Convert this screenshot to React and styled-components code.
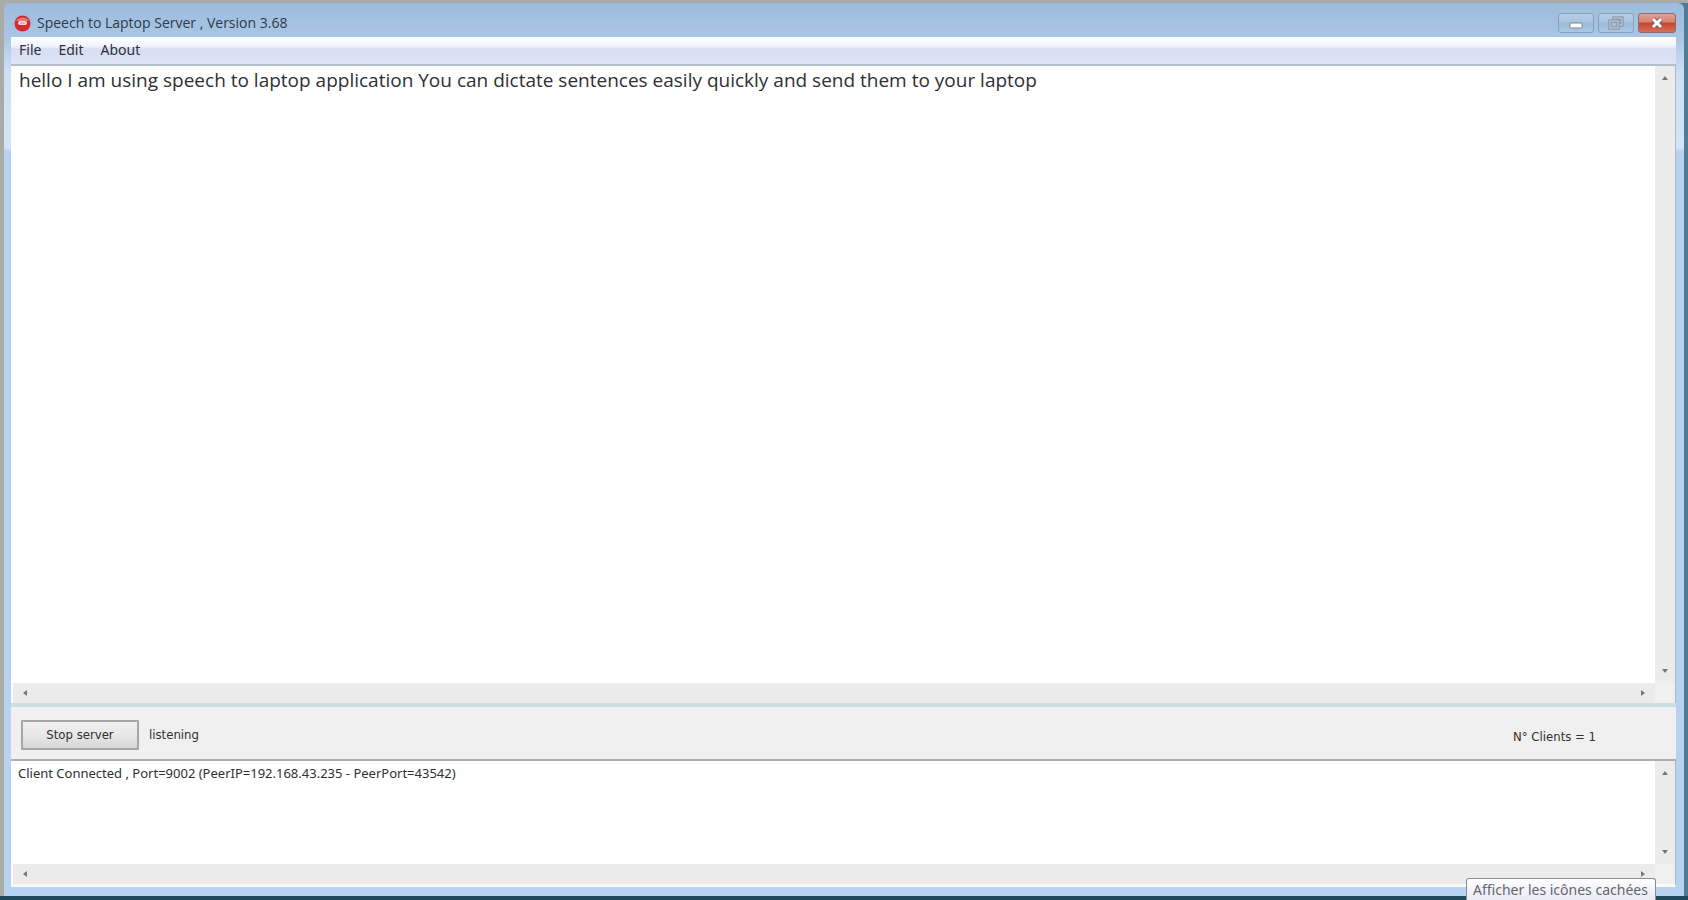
import React from "react";
import styled, { createGlobalStyle } from "styled-components";

const GlobalStyle = createGlobalStyle`
  * {
    box-sizing: border-box;
  }
  body {
    margin: 0;
    background: #a9aba8;
    font-family: "Noto Sans", "Open Sans", sans-serif;
  }
`;

const Desktop = styled.div`
  height: 100vh;
  display: flex;
  padding: 0 4px;
  background: linear-gradient(to right, #a9aba8 50%, #4c7f96 50%);
  border-top: 3px solid #a9aba8;
  border-bottom: 4px solid #1f4a5c;
`;

const Window = styled.main`
  flex: 1;
  min-width: 0;
  display: flex;
  flex-direction: column;
  padding: 0 8px 9px 7px;
  border-radius: 6px 6px 0 0;
  background: linear-gradient(to bottom, #9dbbdb 0, #a9c6e4 34px, #cfe0f4 70px, #d3e4f6 146px, #b7d3f0 147px);
`;

const TitleBar = styled.header`
  height: 34px;
  display: flex;
  align-items: center;
  padding: 6px 0 0 3px;
  gap: 6px;
`;

const Title = styled.h1`
  flex: 1;
  margin: 0;
  font-family: "Open Sans", "Noto Sans", sans-serif;
  font-size: 14px;
  font-weight: 400;
  line-height: 20px;
  color: #2c3a4c;
`;

const WindowButtons = styled.div`
  display: flex;
  gap: 4px;
`;

const WindowButton = styled.button`
  width: ${(props) => (props.$close ? "38px" : "36px")};
  height: 20px;
  display: flex;
  align-items: center;
  justify-content: center;
  padding: 0;
  border: 1px solid ${(props) => (props.$close ? "#8f6a74" : "#86a2bf")};
  border-radius: 3px;
  background: ${(props) =>
    props.$close
      ? "linear-gradient(to bottom, #e0a091 0%, #d98371 45%, #c4442c 50%, #d9705a 100%)"
      : "linear-gradient(to bottom, #b4cce6 0%, #a9c5e0 45%, #9bbad9 50%, #a9c8e4 100%)"};
`;

const MenuBar = styled.nav`
  height: 29px;
  display: flex;
  align-items: flex-start;
  gap: 17px;
  padding: 4px 8px;
  border-bottom: 2px solid #b4bfca;
  background: linear-gradient(to bottom, #ffffff 0, #f1f3fc 9px, #d9dff3 12px, #dde4f5 100%);
`;

const MenuItem = styled.button`
  padding: 0;
  border: 0;
  background: none;
  font: 14px/18px "Noto Sans", "Open Sans", sans-serif;
  color: #30303c;
`;

const Pane = styled.section`
  display: grid;
  grid-template-columns: 1fr 20px;
  grid-template-rows: 1fr 20px;
  flex: ${(props) => (props.$grow ? "1" : "0 0 126px")};
  min-height: 0;
  background: #f0f0f0;
  border-left: 2px solid #ffffff;
  border-right: 1px solid #a9b7c6;
  border-bottom: ${(props) => (props.$grow ? "0" : "3px solid #fafafa")};
`;

const TextBox = styled.textarea`
  width: 100%;
  height: 100%;
  margin: 0;
  border: 0;
  outline: none;
  resize: none;
  overflow: hidden;
  background: #ffffff;
  color: #303030;
  padding: ${(props) => (props.$small ? "4px 5px" : "2px 6px")};
  font-family: ${(props) =>
    props.$small ? '"Noto Sans", "Open Sans", sans-serif' : '"Open Sans", "Noto Sans", sans-serif'};
  font-size: ${(props) => (props.$small ? "13px" : "19px")};
  line-height: ${(props) => (props.$small ? "16px" : "24px")};
`;

const ScrollTrack = styled.div`
  display: flex;
  flex-direction: ${(props) => (props.$vertical ? "column" : "row")};
  justify-content: space-between;
  align-items: center;
  padding: ${(props) => (props.$vertical ? "8px 0" : "0 8px")};
  background: #ececec;
`;

const ScrollButton = styled.button`
  width: 8px;
  height: 8px;
  display: flex;
  align-items: center;
  justify-content: center;
  padding: 0;
  border: 0;
  background: none;
`;

const StatusPanel = styled.section`
  height: 58px;
  display: flex;
  align-items: center;
  padding: 4px 80px 0 10px;
  gap: 10px;
  background: #f0f0f0;
  border-top: 4px solid #cddde4;
  border-bottom: 2px solid #adadad;
`;

const ServerButton = styled.button`
  width: 118px;
  height: 30px;
  padding: 0;
  border: 2px solid #a6a6a6;
  border-radius: 1px;
  background: linear-gradient(to bottom, #f0f0f0 0%, #e8e8e8 50%, #d6d6d6 100%);
  font: 13px/16px "DejaVu Sans Condensed", "DejaVu Sans", sans-serif;
  color: #303030;
`;

const StatusText = styled.span`
  font: 13px/16px "DejaVu Sans Condensed", "DejaVu Sans", sans-serif;
  color: #303030;
`;

const Clients = styled(StatusText)`
  margin-left: auto;
  padding-top: 4px;
`;

const Tooltip = styled.div`
  position: absolute;
  right: 32px;
  bottom: 0;
  width: 190px;
  height: 22px;
  padding: 2px 6px;
  border: 1px solid #8c8c94;
  border-bottom: 0;
  border-radius: 3px 3px 0 0;
  background: linear-gradient(to bottom, #ffffff, #e8e9f3);
  font-size: 14px;
  line-height: 18px;
  white-space: nowrap;
  color: #66666e;
`;

const arrows = {
  up: "M1 6 L4 2 L7 6 Z",
  down: "M1 2 L4 6 L7 2 Z",
  left: "M6 1 L2 4 L6 7 Z",
  right: "M2 1 L6 4 L2 7 Z",
};

const Arrow = ({ dir }) => (
  <ScrollButton type="button" aria-label={`Scroll ${dir}`}>
    <svg width="8" height="8" viewBox="0 0 8 8">
      <path d={arrows[dir]} fill="#777777" />
    </svg>
  </ScrollButton>
);

const ScrollPane = ({ grow, label, text }) => (
  <Pane $grow={grow}>
    <TextBox $small={!grow} aria-label={label} defaultValue={text} spellCheck={false} readOnly={!grow} />
    <ScrollTrack $vertical>
      <Arrow dir="up" />
      <Arrow dir="down" />
    </ScrollTrack>
    <ScrollTrack>
      <Arrow dir="left" />
      <Arrow dir="right" />
    </ScrollTrack>
  </Pane>
);

const App = () => {
  return (
    <Desktop>
      <GlobalStyle />
      <Window>
        <TitleBar>
          <svg width="17" height="17" viewBox="0 0 17 17">
            <circle cx="8.5" cy="8.5" r="8" fill="#d62a30" />
            <path d="M2 5 Q8.5 0 15 5 L14 6 H3 Z" fill="#e8777b" />
            <rect x="4" y="6" width="9" height="4" rx="2" fill="#f7d9da" />
            <path d="M6 8 H11" stroke="#d98084" strokeWidth="1" />
          </svg>
          <Title>Speech to Laptop Server , Version 3.68</Title>
          <WindowButtons>
            <WindowButton type="button" aria-label="Minimize">
              <svg width="16" height="14" viewBox="0 0 16 14">
                <rect x="2" y="7" width="12" height="5" rx="1" fill="#ffffff" stroke="#7b8794" />
              </svg>
            </WindowButton>
            <WindowButton type="button" aria-label="Restore">
              <svg width="16" height="14" viewBox="0 0 16 14">
                <rect x="6" y="2" width="8" height="7" fill="none" stroke="#7b8794" strokeWidth="3" />
                <rect x="6" y="2" width="8" height="7" fill="none" stroke="#d9e2ec" strokeWidth="1" />
                <rect x="2" y="5" width="8" height="7" fill="#a3bfdb" stroke="#7b8794" strokeWidth="3" />
                <rect x="2" y="5" width="8" height="7" fill="none" stroke="#d9e2ec" strokeWidth="1" />
              </svg>
            </WindowButton>
            <WindowButton type="button" aria-label="Close" $close>
              <svg width="14" height="14" viewBox="0 0 14 14">
                <path d="M3 3 L11 11 M11 3 L3 11" stroke="#7d5c66" strokeWidth="5" />
                <path d="M3 3 L11 11 M11 3 L3 11" stroke="#ffffff" strokeWidth="3" />
              </svg>
            </WindowButton>
          </WindowButtons>
        </TitleBar>
        <MenuBar>
          <MenuItem type="button">File</MenuItem>
          <MenuItem type="button">Edit</MenuItem>
          <MenuItem type="button">About</MenuItem>
        </MenuBar>
        <ScrollPane
          grow
          label="Dictated text"
          text="hello I am using speech to laptop application You can dictate sentences easily quickly and send them to your laptop"
        />
        <StatusPanel>
          <ServerButton type="button">Stop server</ServerButton>
          <StatusText>listening</StatusText>
          <Clients>N° Clients = 1</Clients>
        </StatusPanel>
        <ScrollPane
          label="Server log"
          text="Client Connected , Port=9002 (PeerIP=192.168.43.235 - PeerPort=43542)"
        />
      </Window>
      <Tooltip role="tooltip">Afficher les icônes cachées</Tooltip>
    </Desktop>
  );
};

export default App;
